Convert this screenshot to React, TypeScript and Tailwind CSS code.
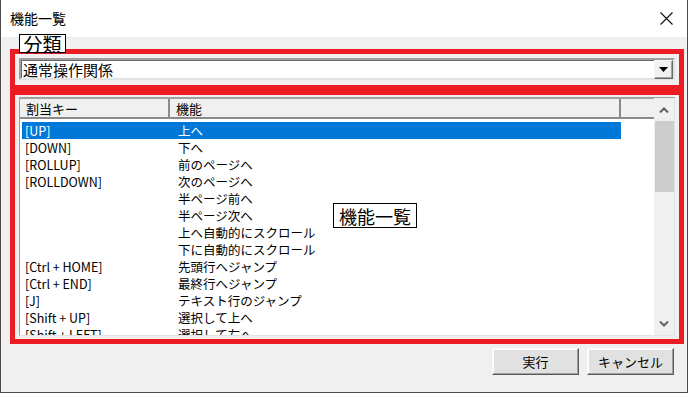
import React from "react";

const rows: [string, string][] = [
  ["[UP]", "上へ"],
  ["[DOWN]", "下へ"],
  ["[ROLLUP]", "前のページへ"],
  ["[ROLLDOWN]", "次のページへ"],
  ["", "半ページ前へ"],
  ["", "半ページ次へ"],
  ["", "上へ自動的にスクロール"],
  ["", "下に自動的にスクロール"],
  ["[Ctrl + HOME]", "先頭行へジャンプ"],
  ["[Ctrl + END]", "最終行へジャンプ"],
  ["[J]", "テキスト行のジャンプ"],
  ["[Shift + UP]", "選択して上へ"],
  ["[Shift + LEFT]", "選択して左へ"],
];

const font = { fontFamily: '"Noto Sans CJK JP", "Noto Sans", sans-serif' };

function WinButton({ label }: { label: string }) {
  return (
    <button className="h-[27px] w-[87px] border border-t-[#f8f8f8] border-l-[#f8f8f8] border-r-[#5a5a5a] border-b-[#5a5a5a] bg-[#e1e1e1] text-[13px] text-black shadow-[inset_-1px_-1px_0_#a0a0a0,inset_1px_1px_0_#ffffff]">
      {label}
    </button>
  );
}

export default function App() {
  return (
    <div
      className="relative w-[688px] h-[393px] overflow-hidden bg-[#f0f0f0] border-l border-r border-b border-[#4a4a4a] flex flex-col"
      style={font}
    >
      {/* title bar */}
      <div className="h-[37px] bg-white flex items-center justify-between pl-[9px] pr-[14px] shrink-0">
        <span className="text-[14px] text-black">機能一覧</span>
        <svg width="13" height="13" viewBox="0 0 13 13">
          <path d="M0.5 0.5 L12.5 12.5 M12.5 0.5 L0.5 12.5" stroke="#111" strokeWidth="1.1" />
        </svg>
      </div>

      <div className="flex flex-col pl-[9px] pr-[3px] pt-[12px]">
        {/* category box */}
        <div className="border-[5px] border-[#ed1c24] pt-[4px] pb-[5px] px-[4px]">
          <div className="h-[22px] flex items-center bg-white border-2 border-t-[#a0a0a0] border-l-[#a0a0a0] border-r-[#e3e3e3] border-b-[#e3e3e3] shadow-[inset_1px_1px_0_#696969]">
            <span className="flex-1 pl-[2px] text-[15px] leading-none text-black">通常操作関係</span>
            <div className="w-[19px] h-[19px] flex items-center justify-center bg-[#f0f0f0] border border-t-[#f8f8f8] border-l-[#f8f8f8] border-r-[#696969] border-b-[#696969] shadow-[inset_-1px_-1px_0_#a0a0a0]">
              <svg width="9" height="5" viewBox="0 0 9 5">
                <path d="M0 0 H9 L4.5 5 Z" fill="#000" />
              </svg>
            </div>
          </div>
        </div>

        {/* list box */}
        <div className="border-[5px] border-[#ed1c24] pt-[2px] pb-[3px] px-[4px]">
          <div className="h-[239px] flex bg-white border border-t-[#a0a0a0] border-l-[#a0a0a0] border-r-[#e3e3e3] border-b-[#e3e3e3] overflow-hidden">
            <div className="flex-1 flex flex-col min-w-0">
              <div className="h-[21px] flex bg-[#f0f0f0] border-t border-[#a0a0a0] border-b-2 border-b-[#8a8a8a] text-[13px] leading-none text-black shrink-0">
                <div className="w-[150px] pl-[6px] flex items-center border-r-2 border-r-[#8a8a8a]">割当キー</div>
                <div className="w-[451px] pl-[6px] flex items-center border-r-2 border-r-[#8a8a8a]">機能</div>
                <div className="flex-1" />
              </div>
              <div className="flex-1 overflow-hidden pt-[3px] pl-[2px] text-[12.5px] leading-[17px]">
                {rows.map(([k, f], i) => (
                  <div
                    key={i}
                    className={`h-[17px] w-[599px] flex items-center ${i === 0 ? "bg-[#0078d7] text-white" : "text-black"}`}
                  >
                    <div className="w-[148px] pl-[3px] whitespace-nowrap">{k}</div>
                    <div className="pl-[8px] whitespace-nowrap">{f}</div>
                  </div>
                ))}
              </div>
            </div>
            {/* scrollbar */}
            <div className="w-[20px] bg-[#f0f0f0] flex flex-col items-center shrink-0">
              <div className="h-[23px] w-full flex items-center justify-center">
                <svg width="10" height="6" viewBox="0 0 10 6">
                  <path d="M1 5.5 L5 1.5 L9 5.5" stroke="#606060" strokeWidth="2" fill="none" />
                </svg>
              </div>
              <div className="h-[71px] w-[19px] bg-[#cdcdcd]" />
              <div className="flex-1" />
              <div className="h-[23px] w-full flex items-center justify-center">
                <svg width="10" height="6" viewBox="0 0 10 6">
                  <path d="M1 0.5 L5 4.5 L9 0.5" stroke="#606060" strokeWidth="2" fill="none" />
                </svg>
              </div>
            </div>
          </div>
        </div>

        {/* buttons */}
        <div className="flex justify-end gap-[8px] pt-[4px] pr-[10px]">
          <WinButton label="実行" />
          <WinButton label="キャンセル" />
        </div>
      </div>

      {/* annotation labels */}
      <div className="absolute left-[18px] top-[34px] h-[19px] w-[47px] flex items-center justify-center bg-white border border-black text-[19px] leading-none text-black">
        分類
      </div>
      <div className="absolute left-[332px] top-[203px] h-[25px] w-[84px] flex items-center justify-center bg-white border border-black text-[18px] leading-none text-black">
        機能一覧
      </div>
    </div>
  );
}
